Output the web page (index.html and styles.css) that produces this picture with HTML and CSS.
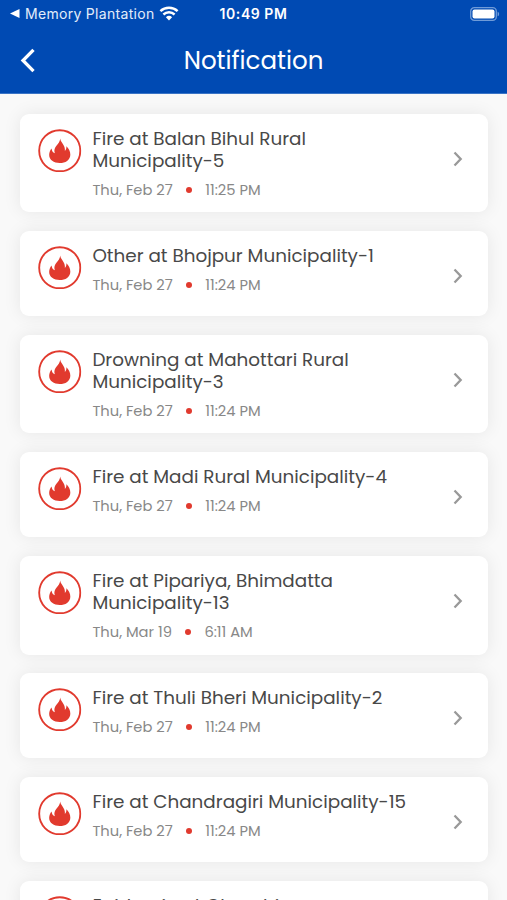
FILE: index.html
```
<!DOCTYPE html>
<html lang="en">
<head>
<meta charset="utf-8">
<title>Notification</title>
<link rel="stylesheet" href="styles.css">
</head>
<body>
<svg class="defs" aria-hidden="true">
  <symbol id="flame" viewBox="0 0 44 44">
    <circle cx="22" cy="22" r="20.8" fill="none" stroke="currentColor" stroke-width="1.9"/>
    <path fill="currentColor" d="M22.500 9.600C22.600 13.500 28 16.200 27.200 22.300C28.300 21.200 28.900 19.800 28.700 17.500C31 19.500 32.800 22.700 32.700 26C32.500 31.400 27.800 34.500 22 34.500C16 34.500 11.300 31.400 11.300 26.400C11.300 23.800 12.200 21.500 13.800 19.800C13.900 22 14.900 23.800 17 24.500C14.800 17.500 21.800 16.500 22.500 9.600Z"/>
  </symbol>
  <symbol id="next" viewBox="0 0 10 16">
    <path d="M1.500 1.500 7.700 8l-6.200 6.500" fill="none" stroke="currentColor" stroke-width="2.300"/>
  </symbol>
</svg>
<header class="header">
  <div class="status">
    <div class="return">
      <svg class="tri" viewBox="0 0 10 9"><path d="M0 4.500 9.500 0v9z" fill="currentColor"/></svg>
      <span class="app">Memory Plantation</span>
      <svg class="wifi" viewBox="0 0 20 15" fill="none" stroke="currentColor"><path d="M1.400 5.200a12.600 12.600 0 0 1 17.200 0" stroke-width="2.500"/><path d="M4.400 8.500a8.200 8.200 0 0 1 11.200 0" stroke-width="2.400"/><path d="M10 14.500 6.900 11.300a4.500 4.500 0 0 1 6.200 0z" fill="currentColor" stroke="none"/></svg>
    </div>
    <div class="clock">10:49 PM</div>
    <svg class="battery" viewBox="0 0 30 14"><rect x=".7" y=".7" width="25.600" height="12.600" rx="3.600" fill="none" stroke="#6f9bd8" stroke-width="1.300"/><rect x="2.500" y="2.500" width="22" height="9" rx="2" fill="#fff"/><path d="M27.600 4.700c2 .600 2 4 0 4.600z" fill="#6f9bd8"/></svg>
  </div>
  <div class="bar">
    <svg class="back" viewBox="0 0 16 25"><path d="M13.500 1.800 3 12.500l10.500 10.700" fill="none" stroke="currentColor" stroke-width="3.300"/></svg>
    <h1 class="heading">Notification</h1>
  </div>
</header>
<main class="list">
  <article class="card"><svg class="icon"><use href="#flame"/></svg><div class="body"><h2 class="title">Fire at Balan Bihul Rural<br>Municipality-5</h2><p class="meta"><span>Thu, Feb 27</span><i class="dot"></i><span>11:25 PM</span></p></div><svg class="next"><use href="#next"/></svg></article>
  <article class="card"><svg class="icon"><use href="#flame"/></svg><div class="body"><h2 class="title">Other at Bhojpur Municipality-1</h2><p class="meta"><span>Thu, Feb 27</span><i class="dot"></i><span>11:24 PM</span></p></div><svg class="next"><use href="#next"/></svg></article>
  <article class="card"><svg class="icon"><use href="#flame"/></svg><div class="body"><h2 class="title">Drowning at Mahottari Rural<br>Municipality-3</h2><p class="meta"><span>Thu, Feb 27</span><i class="dot"></i><span>11:24 PM</span></p></div><svg class="next"><use href="#next"/></svg></article>
  <article class="card"><svg class="icon"><use href="#flame"/></svg><div class="body"><h2 class="title">Fire at Madi Rural Municipality-4</h2><p class="meta"><span>Thu, Feb 27</span><i class="dot"></i><span>11:24 PM</span></p></div><svg class="next"><use href="#next"/></svg></article>
  <article class="card"><svg class="icon"><use href="#flame"/></svg><div class="body"><h2 class="title">Fire at Pipariya, Bhimdatta<br>Municipality-13</h2><p class="meta"><span>Thu, Mar 19</span><i class="dot"></i><span>6:11 AM</span></p></div><svg class="next"><use href="#next"/></svg></article>
  <article class="card"><svg class="icon"><use href="#flame"/></svg><div class="body"><h2 class="title">Fire at Thuli Bheri Municipality-2</h2><p class="meta"><span>Thu, Feb 27</span><i class="dot"></i><span>11:24 PM</span></p></div><svg class="next"><use href="#next"/></svg></article>
  <article class="card"><svg class="icon"><use href="#flame"/></svg><div class="body"><h2 class="title">Fire at Chandragiri Municipality-15</h2><p class="meta"><span>Thu, Feb 27</span><i class="dot"></i><span>11:24 PM</span></p></div><svg class="next"><use href="#next"/></svg></article>
  <article class="card"><svg class="icon"><use href="#flame"/></svg><div class="body"><h2 class="title">Epidemic at Ghorahi</h2></div><svg class="next"><use href="#next"/></svg></article>
</main>
</body>
</html>
```

FILE: styles.css
```
* { box-sizing: border-box; }
html, body { margin: 0; height: 900px; overflow: hidden; }
body { background: #f9f9f9; font-family: Poppins, Inter, sans-serif; }
.defs { display: none; }
.header { height: 94px; background: #004ab3; color: #fff; border-bottom: 1px solid #3a74c6; }
.status { display: grid; grid-template-columns: 1fr 70px 1fr; align-items: center; height: 27px; padding: 0 7px 0 10px; font-family: Inter, sans-serif; font-size: 14px; }
.return { display: flex; align-items: center; white-space: nowrap; }
.tri { width: 10px; height: 9px; margin-right: 5px; }
.app { letter-spacing: 0.3px; color: #e3edfa; }
.wifi { width: 20px; height: 15px; margin-left: 5px; }
.clock { margin-left: -3px; font-weight: 600; letter-spacing: 0.55px; white-space: nowrap; text-align: center; }
.battery { width: 30px; height: 14px; justify-self: end; }
.bar { display: grid; grid-template-columns: 60px 1fr 60px; align-items: center; height: 66px; }
.back { width: 16px; height: 25px; margin-left: 20px; }
.heading { margin: 0; padding-top: 1px; text-align: center; font-size: 24.500px; font-weight: 400; line-height: 36px; }
.list { display: flex; flex-direction: column; gap: 18.350px; height: 806px; overflow: hidden; padding: 19.500px 19.500px 0 20.400px; }
.card { display: flex; flex: none; align-items: flex-start; min-height: 85.500px; padding: 14.500px 25px 12.900px 18px; border-radius: 9px; background: #fff; box-shadow: 0 0 18px rgba(0, 0, 0, 0.08); }
.icon { flex: none; width: 43.500px; height: 43.500px; margin: 0.500px 0.400px 0 -0.400px; color: #e13a2e; }
.body { flex: 1; padding-left: 10.500px; white-space: nowrap; }
.title { margin: 0; font-size: 18.370px; font-weight: 400; line-height: 22px; color: #484848; }
.meta { display: flex; align-items: center; margin: 7.500px 0 0; font-size: 14.690px; line-height: 20px; color: #888; }
.dot { width: 6px; height: 6px; margin: 0 13px 0 13.500px; border-radius: 50%; background: #e13a2e; }
.next { flex: none; width: 10px; height: 16px; margin-top: 22.700px; color: #999; }
```
